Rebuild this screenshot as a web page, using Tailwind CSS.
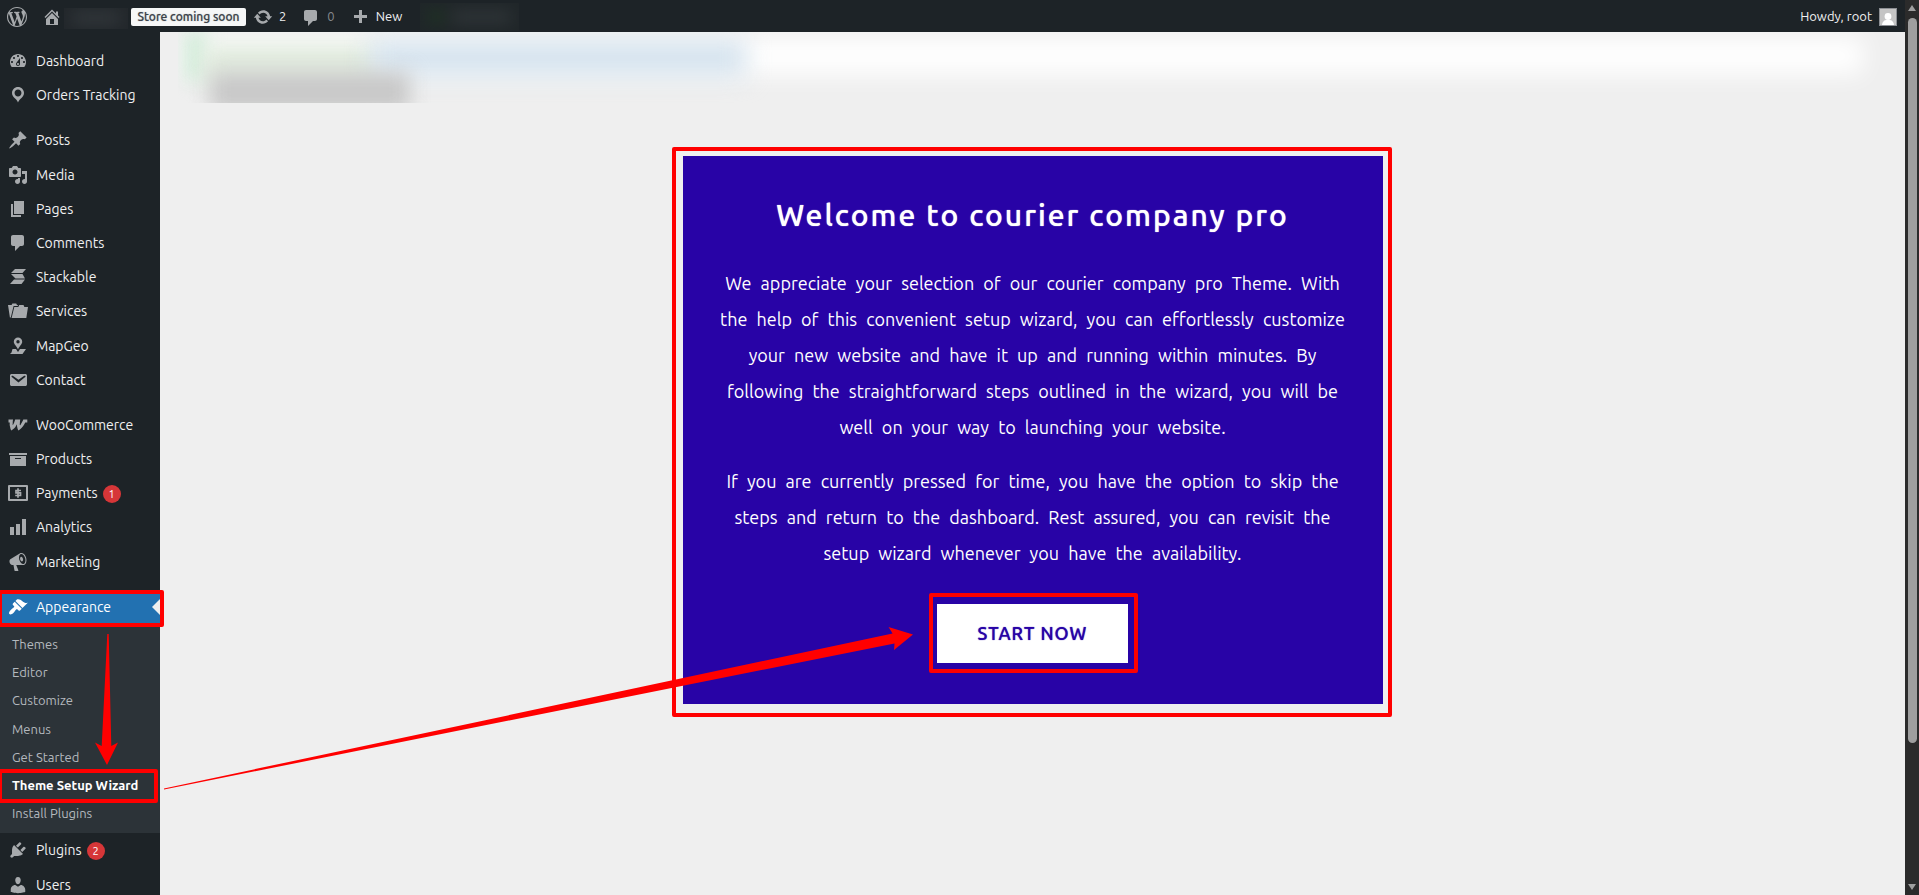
<!DOCTYPE html>
<html lang="en">
<head>
<meta charset="utf-8">
<meta name="viewport" content="width=device-width, initial-scale=1">
<title>Theme Setup Wizard</title>
<script src="https://cdn.jsdelivr.net/npm/@tailwindcss/browser@4"></script>
</head>
<body class="relative flex h-screen overflow-hidden bg-[#efefef] font-['Ubuntu','Open_Sans',sans-serif] text-[#f0f0f1]">

<div class="flex min-w-0 flex-1 flex-col">
  <!-- Admin bar -->
  <header class="flex h-8 shrink-0 items-center bg-[#1d2327] pt-px pr-2 text-[13px] text-[#f0f0f1]">
    <a href="#" aria-label="About WordPress" class="ml-[7px]"><svg class="size-5 fill-[#a7aaad]" viewBox="0 0 20 20"><path d="M20 10c0-5.51-4.49-10-10-10C4.48 0 0 4.49 0 10c0 5.52 4.48 10 10 10 5.51 0 10-4.48 10-10zM7.78 15.37L4.37 6.22c.55-.02 1.17-.08 1.17-.08.5-.06.44-1.13-.06-1.11 0 0-1.45.11-2.37.11-.18 0-.37 0-.58-.01C4.12 2.69 6.87 1.11 10 1.11c2.33 0 4.45.87 6.05 2.34-.68-.11-1.65.39-1.65 1.58 0 .74.45 1.36.9 2.1.35.61.55 1.36.55 2.46 0 1.49-1.4 5-1.4 5l-3.03-8.37c.54-.02.82-.17.82-.17.5-.05.44-1.25-.06-1.22 0 0-1.44.12-2.38.12-.87 0-2.33-.12-2.33-.12-.5-.03-.56 1.2-.06 1.22l.92.08 1.26 3.41zM17.41 10c.24-.64.74-1.87.43-4.25.7 1.29 1.05 2.71 1.05 4.25 0 3.29-1.73 6.24-4.4 7.78.97-2.59 1.94-5.2 2.92-7.78zM6.1 18.09C3.12 16.65 1.11 13.53 1.11 10c0-1.3.23-2.48.72-3.59C3.25 10.3 4.67 14.2 6.1 18.09zm4.03-6.63l2.58 6.98c-.86.29-1.76.45-2.71.45-.79 0-1.57-.11-2.29-.33.81-2.38 1.62-4.74 2.42-7.1z"/></svg></a>
    <a href="#" aria-label="Visit site" class="ml-[15px] flex items-center"><svg class="size-5 fill-[#a7aaad]" viewBox="0 0 20 20"><path d="M16 8.5l1.53 1.53-1.06 1.06L10 4.6l-6.47 6.49-1.06-1.06L10 2.5l4 4v-2h2v4zm-6-2.46l6 5.99V18H4v-5.97zM12 17v-5H8v5h4z"/></svg>
      <span class="ml-0.5 mt-1 h-[21px] w-16 overflow-hidden bg-[#22272b]"><span class="mx-2 my-1 block h-3 bg-[#34393d] blur-sm"></span></span></a>
    <a href="#" class="ml-[3px] h-[18px] w-[115px] rounded-xs bg-[#f6f7f7] text-center text-xs leading-[18px] font-medium text-[#3c434a] [text-shadow:0_0_1px_#3c434a80]">Store coming soon</a>
    <a href="#" class="ml-[7px] flex items-center gap-1.5"><svg class="size-5 fill-[#a7aaad]" viewBox="0 0 20 20"><path d="M10.2 3.28c3.53 0 6.43 2.61 6.92 6h2.08l-3.5 4-3.5-4h2.32c-.45-1.97-2.21-3.45-4.32-3.45-1.45 0-2.73.71-3.54 1.78L4.95 5.66C6.23 4.2 8.11 3.28 10.2 3.28zm-.4 13.44c-3.52 0-6.43-2.61-6.92-6H.8l3.5-4c1.17 1.33 2.33 2.67 3.5 4H5.48c.45 1.97 2.21 3.45 4.32 3.45 1.45 0 2.73-.71 3.54-1.78l1.71 1.95c-1.28 1.46-3.15 2.38-5.25 2.38z"/></svg>2</a>
    <a href="#" class="ml-[15px] flex items-center gap-1.5 text-[#84888b]"><svg class="mt-0.5 size-5 fill-[#a7aaad]" viewBox="0 0 20 20"><path d="M5 2h9c1.1 0 2 .9 2 2v7c0 1.1-.9 2-2 2h-2l-5 5v-5H5c-1.1 0-2-.9-2-2V4c0-1.1.9-2 2-2z"/></svg>0</a>
    <a href="#" class="ml-[15px] flex items-center gap-1.5"><svg class="mt-0.5 size-5 fill-[#a7aaad]" viewBox="0 0 20 20"><path d="M17 7v3h-5v5H9v-5H4V7h5V2h3v5h5z"/></svg>New</a>
    <span class="ml-[18px] h-7 w-[99px] overflow-hidden bg-[#202629]"><span class="flex h-full gap-2 px-2 py-2 blur-sm"><span class="w-4 bg-[#1f3524]"></span><span class="flex-1 bg-[#31373a]"></span></span></span>
    <a href="#" class="ml-auto flex items-center gap-[7px]">Howdy, root
      <svg class="size-[18px]" viewBox="0 0 18 18"><rect width="18" height="18" fill="#8c8f94"/><rect x="1" y="1" width="16" height="16" fill="#c5c5c5"/><circle cx="9" cy="8.500" r="3.400" fill="#fff"/><path d="M3 17c.3-2.800 1.600-4.500 4-5h4c2.400.5 3.700 2.200 4 5z" fill="#fff"/></svg></a>
  </header>

  <div class="flex min-h-0 flex-1">
    <!-- Admin menu -->
    <nav class="w-40 shrink-0 bg-[#1d2327] pt-3 text-sm leading-[18px]">
      <ul class="[&_svg]:mx-2 [&_svg]:size-5 [&_svg]:shrink-0 [&_svg]:fill-[#a7aaad]">
        <li><a href="#" class="flex h-[34px] items-center"><svg viewBox="0 0 20 20"><path d="M3.76 16h12.48c1.1-1.37 1.76-3.11 1.76-5 0-4.42-3.58-8-8-8s-8 3.58-8 8c0 1.89.66 3.63 1.76 5zM10 4c.55 0 1 .45 1 1s-.45 1-1 1-1-.45-1-1 .45-1 1-1zM6 6c.55 0 1 .45 1 1s-.45 1-1 1-1-.45-1-1 .45-1 1-1zm8 0c.55 0 1 .45 1 1s-.45 1-1 1-1-.45-1-1 .45-1 1-1zm-5.37 5.55L12 7v6c0 1.1-.9 2-2 2s-2-.9-2-2c0-.57.24-1.08.63-1.45zM4 10c.55 0 1 .45 1 1s-.45 1-1 1-1-.45-1-1 .45-1 1-1zm12 0c.55 0 1 .45 1 1s-.45 1-1 1-1-.45-1-1 .45-1 1-1zm-5 3c0-.55-.45-1-1-1s-1 .45-1 1 .45 1 1 1 1-.45 1-1z"/></svg>Dashboard</a></li>
        <li class="mb-[11px]"><a href="#" class="flex h-[34px] items-center"><svg viewBox="0 0 20 20"><path d="M10 2C6.69 2 4 4.69 4 8c0 2.02 1.17 3.71 2.53 4.89.43.37 1.18.96 1.85 1.83.74.97 1.41 2.01 1.62 2.71.21-.7.88-1.74 1.62-2.71.67-.87 1.42-1.46 1.85-1.83C14.83 11.71 16 10.02 16 8c0-3.31-2.69-6-6-6zm0 2.56c1.9 0 3.44 1.54 3.44 3.44S11.9 11.44 10 11.44 6.56 9.9 6.56 8 8.1 4.56 10 4.56z"/></svg>Orders Tracking</a></li>
        <li class="mb-px"><a href="#" class="flex h-[34px] items-center"><svg viewBox="0 0 20 20"><path d="M10.44 3.02l1.82-1.82 6.36 6.35-1.83 1.82c-1.05-.68-2.48-.57-3.41.36l-.75.75c-.92.93-1.04 2.35-.35 3.41l-1.83 1.82-2.41-2.41-2.8 2.79c-.42.42-3.38 2.71-3.8 2.29s1.86-3.39 2.28-3.81l2.79-2.79L4.1 9.36l1.83-1.82c1.05.69 2.48.57 3.4-.36l.75-.75c.93-.92 1.05-2.35.36-3.41z"/></svg>Posts</a></li>
        <li><a href="#" class="flex h-[34px] items-center"><svg viewBox="0 0 20 20"><path d="M13 11V4c0-.55-.45-1-1-1h-1.67L9 1H5L3.67 3H2c-.55 0-1 .45-1 1v7c0 .55.45 1 1 1h10c.55 0 1-.45 1-1zM7 4.5c1.38 0 2.5 1.12 2.5 2.5S8.38 9.5 7 9.5 4.5 8.38 4.5 7 5.62 4.5 7 4.5zM14 6h5v10.5c0 1.38-1.12 2.5-2.5 2.5S14 17.88 14 16.5s1.12-2.5 2.5-2.5c.17 0 .34.02.5.05V9h-3V6zm-4 8.05V13h2v3.5c0 1.38-1.12 2.5-2.5 2.5S7 17.88 7 16.5 8.12 14 9.5 14c.17 0 .34.02.5.05z"/></svg>Media</a></li>
        <li><a href="#" class="flex h-[34px] items-center"><svg viewBox="0 0 20 20"><path d="M6 15V2h10v13H6zm-1 1h8v2H3V5h2v11z"/></svg>Pages</a></li>
        <li><a href="#" class="flex h-[34px] items-center"><svg viewBox="0 0 20 20"><path d="M5 2h9c1.1 0 2 .9 2 2v7c0 1.1-.9 2-2 2h-2l-5 5v-5H5c-1.1 0-2-.9-2-2V4c0-1.1.9-2 2-2z"/></svg>Comments</a></li>
        <li><a href="#" class="flex h-[34px] items-center"><svg viewBox="0 0 20 20"><path d="M7 2h11l-3.500 4H3zM3 7h11.500L17 11.500H7.500zM6 12.500h11L13.500 17H2z"/></svg>Stackable</a></li>
        <li class="mb-px"><a href="#" class="flex h-[34px] items-center"><svg viewBox="0 0 20 20"><path d="M0 4h3.600l.8-1.500h3.800L9 4h1l-.3 1H5.600L2.800 16.500h-.9zM6.300 6h4l.9-2h4.300l.9 2H20l-1.700 11H3.600z"/></svg>Services</a></li>
        <li><a href="#" class="flex h-[34px] items-center"><svg viewBox="0 0 20 20"><path fill-rule="evenodd" d="M10 1.500a4.200 4.200 0 0 1 4.200 4.200c0 2.600-2.900 4.300-4.200 7.800-1.300-3.500-4.200-5.200-4.200-7.800A4.200 4.200 0 0 1 10 1.500zm0 2.600a1.700 1.700 0 1 0 0 3.400 1.700 1.700 0 0 0 0-3.400z"/><path d="M4.500 13H8l2 3 2-3h6l-3.500 5H2l1.500-1.500z"/></svg>MapGeo</a></li>
        <li class="mb-[11px]"><a href="#" class="flex h-[34px] items-center"><svg viewBox="0 0 20 20"><path d="M3.870 4h13.250C18.370 4 19 4.590 19 5.790v8.420c0 1.190-.63 1.790-1.880 1.790H3.870c-1.250 0-1.880-.6-1.880-1.790V5.790c0-1.200.63-1.790 1.880-1.790zm6.620 8.600l6.740-5.530c.24-.2.43-.66.13-1.070-.29-.41-.82-.42-1.170-.17l-5.700 3.860L4.800 5.830c-.35-.25-.88-.24-1.170.17-.3.41-.11.87.13 1.070z"/></svg>Contact</a></li>
        <li><a href="#" class="flex h-[34px] items-center"><svg viewBox="0 0 20 20"><path d="M.5 6h2.800c-.4 3-.3 5.200.6 7.300C5.900 12 7.300 9.500 8.300 6h2.200c-.5 3-.3 5.200.5 7.300 2.200-1.500 3.900-4 5.300-7.300h3" fill="none" stroke="#a7aaad" stroke-width="3"/></svg>WooCommerce</a></li>
        <li><a href="#" class="flex h-[34px] items-center"><svg viewBox="0 0 20 20"><path d="M19 4v2H1V4h18zM2 7h16v10H2V7zm11 3V9H7v1h6z"/></svg>Products</a></li>
        <li><a href="#" class="flex h-[34px] items-center"><svg viewBox="0 0 20 20"><path fill-rule="evenodd" d="M1 2h18a1 1 0 0 1 1 1v14a1 1 0 0 1-1 1H1a1 1 0 0 1-1-1V3a1 1 0 0 1 1-1zm1 2v12h16V4z"/><path d="M13 7.500H8v2.400h4.500v2.600H7.200M10 5.200v9.600" fill="none" stroke="#a7aaad" stroke-width="1.700"/></svg>Payments<span class="ml-[5px] mt-px size-[18px] rounded-full bg-[#d63638] text-center text-[11px] text-white">1</span></a></li>
        <li class="mb-px"><a href="#" class="flex h-[34px] items-center"><svg viewBox="0 0 20 20"><path d="M18 18V2h-4v16h4zm-6 0V7H8v11h4zm-6 0v-8H2v8h4z"/></svg>Analytics</a></li>
        <li class="mb-[11px]"><a href="#" class="flex h-[34px] items-center"><svg viewBox="0 0 20 20"><path d="M18.150 5.940c.46 1.620.38 3.220-.02 4.480-.42 1.280-1.260 2.180-2.300 2.480-.16.06-.26.06-.4.06-.06.02-.12.02-.18.02-.06.02-.14.02-.22.02h-6.800l2.220 5.500c.02.14-.06.26-.14.34-.08.1-.24.16-.34.16H6.950c-.1 0-.26-.06-.34-.16-.08-.08-.16-.2-.14-.34l-1-5.500H4.250l-.02-.02c-.5.06-1.080-.18-1.540-.62s-.88-1.080-1.060-1.880c-.24-.8-.2-1.560-.02-2.200.18-.62.58-1.080 1.060-1.300l.02-.02 9-5.400c.1-.06.18-.1.24-.16.06-.04.14-.08.24-.12.16-.08.28-.12.5-.18 1.040-.3 2.240.1 3.220.98s1.840 2.240 2.260 3.860zm-2.580 5.980h-.02c.4-.1.74-.34 1.040-.7.58-.7.86-1.760.86-3.040 0-.64-.1-1.300-.28-1.980-.34-1.360-1.020-2.500-1.780-3.240s-1.680-1.100-2.460-.88c-.82.22-1.400.96-1.700 2-.32 1.040-.28 2.360.06 3.720.38 1.360 1 2.500 1.800 3.240.78.74 1.620 1.100 2.480.88zm-2.540-7.080c.22-.04.42-.02.62.04.38.16.76.48 1.020 1s.42 1.200.42 1.780c0 .3-.04.56-.12.8-.18.48-.44.84-.86.94-.34.1-.8-.06-1.140-.4s-.64-.86-.78-1.500c-.18-.62-.12-1.240.02-1.720s.48-.84.82-.94z"/></svg>Marketing</a></li>
        <li class="relative">
          <a href="#" class="flex h-[34px] items-center bg-[#2271b1] text-white"><svg viewBox="0 0 20 20"><path fill="#fff" d="M14.480 11.060L7.410 3.990l1.500-1.500c.5-.56 2.300-.47 3.510.32 1.210.8 1.430 1.280 2.910 2.100 1.180.64 2.450 1.260 4.450.85zm-.71.71L6.700 4.700 4.930 6.470c-.39.39-.39 1.020 0 1.410l1.060 1.060c.39.39.39 1.030 0 1.420-.6.6-1.430 1.110-2.210 1.690-.35.26-.7.53-1.010.84C1.430 14.230.4 16.080 1.400 17.070c.99 1 2.840-.03 4.180-1.360.31-.31.58-.66.85-1.020.57-.78 1.080-1.610 1.690-2.210.39-.39 1.020-.39 1.410 0l1.060 1.060c.39.39 1.020.39 1.410 0z"/></svg>Appearance
            <span class="ml-auto border-y-8 border-r-8 border-y-transparent border-r-[#efefef]"></span></a>
          <span class="absolute top-0 -right-1 -left-0.5 h-[37px] rounded-xs border-4 border-[#ff0000]"></span>
          <ul class="bg-[#2c3338] py-1.5 text-[13px] leading-7 text-[#b4b9be] [&_a]:block [&_a]:pl-3">
            <li><a href="#">Themes</a></li>
            <li><a href="#">Editor</a></li>
            <li><a href="#">Customize</a></li>
            <li class="mt-px"><a href="#">Menus</a></li>
            <li><a href="#">Get Started</a></li>
            <li class="relative"><a href="#" aria-current="page" class="font-bold text-white">Theme Setup Wizard</a>
              <span class="absolute -top-0.5 right-0.5 -left-0.5 h-[34px] rounded-xs border-4 border-[#ff0000]"></span></li>
            <li><a href="#">Install Plugins</a></li>
          </ul>
        </li>
        <li class="mb-px"><a href="#" class="flex h-[34px] items-center"><svg viewBox="0 0 20 20"><path d="M13.110 4.360L9.870 7.600 8 5.730l3.240-3.240c.35-.34 1.050-.2 1.560.32.52.51.66 1.210.31 1.550zm-8 1.770l.91-1.120 9.010 9.010-1.190.84c-.71.71-2.630 1.160-3.820 1.160H6.140L4.900 17.260c-.59.59-1.540.59-2.120 0-.59-.58-.59-1.530 0-2.120l1.240-1.240v-3.880c0-1.130.4-3.190 1.090-3.890zm7.260 3.970l3.240-3.240c.34-.35 1.040-.21 1.550.31.52.51.66 1.210.31 1.550l-3.240 3.250z"/></svg>Plugins<span class="ml-[5px] mt-px size-[18px] rounded-full bg-[#d63638] text-center text-[11px] text-white">2</span></a></li>
        <li><a href="#" class="flex h-[34px] items-center"><svg viewBox="0 0 20 20"><path d="M10 9.250c-2.270 0-2.730-3.440-2.730-3.440C7 4.020 7.820 2 9.970 2c2.160 0 2.980 2.020 2.710 3.810 0 0-.41 3.440-2.680 3.440zm0 2.570L12.720 10c2.390 0 4.520 2.330 4.520 4.530v2.490s-3.650 1.130-7.240 1.130c-3.650 0-7.240-1.130-7.240-1.130v-2.490c0-2.250 1.940-4.480 4.470-4.480z"/></svg>Users</a></li>
      </ul>
    </nav>

    <main class="min-w-0 flex-1">
      <!-- Obscured notice -->
      <div class="relative mx-[18px] h-[71px] overflow-hidden" aria-hidden="true">
        <div class="absolute top-1.5 right-6 left-2 h-9 bg-white blur-[12px]"></div>
        <div class="absolute top-0 left-2 h-12 w-5 bg-[#cdebd6] blur-[9px]"></div>
        <div class="absolute top-3 left-6 h-10 w-44 bg-[#e2ecdf] blur-[10px]"></div>
        <div class="absolute top-2 left-48 h-9 w-[376px] bg-[#d5e3ee] blur-[12px]"></div>
        <div class="absolute top-10 left-8 h-10 w-[200px] bg-[#c8c8c8] blur-[10px]"></div>
      </div>

      <section class="relative mx-auto mt-[53px] flex w-[700px] max-w-full flex-col items-center bg-[#2803a6] px-[30px] pt-[38px] pb-[41px] text-center text-white">
        <h1 class="text-[30px] leading-[42px] font-medium tracking-[2px] [text-shadow:0_0_1px_#fff]">Welcome to courier company pro</h1>
        <p class="mt-[29px] text-lg leading-9 whitespace-nowrap [word-spacing:5px]">We appreciate your selection of our courier company pro Theme. With<br>the help of this convenient setup wizard, you can effortlessly customize<br>your new website and have it up and running within minutes. By<br>following the straightforward steps outlined in the wizard, you will be<br>well on your way to launching your website.</p>
        <p class="mt-[18px] text-lg leading-9 whitespace-nowrap [word-spacing:5px]">If you are currently pressed for time, you have the option to skip the<br>steps and return to the dashboard. Rest assured, you can revisit the<br>setup wizard whenever you have the availability.</p>
        <div class="relative mt-[33px]">
          <button type="button" class="block h-[59px] w-[191px] bg-white pb-0.5 text-lg font-medium tracking-[1px] text-[#2803a6] [text-shadow:0_0_1px_#2803a6]">START NOW</button>
          <span class="pointer-events-none absolute -top-[11px] -right-2.5 -bottom-2.5 -left-2 rounded-xs border-4 border-[#ff0000]"></span>
        </div>
        <span class="pointer-events-none absolute -top-[9px] -right-[9px] -bottom-[13px] -left-[11px] rounded-xs border-4 border-[#ff0000]"></span>
      </section>
    </main>
  </div>
</div>

<!-- Scrollbar -->
<div class="flex w-3.5 shrink-0 flex-col items-center bg-[#2b2b2b] py-[5px]" aria-hidden="true">
  <span class="border-x-4 border-b-[6px] border-x-transparent border-b-[#9f9f9f]"></span>
  <span class="mt-[7px] h-[725px] w-[9px] rounded-full bg-[#9f9f9f]"></span>
  <span class="mt-auto border-x-4 border-t-[6px] border-x-transparent border-t-[#9f9f9f]"></span>
</div>

<!-- Annotation arrows -->
<svg class="pointer-events-none absolute top-0 left-0" width="1919" height="895" viewBox="0 0 1919 895" fill="#ff0000" aria-hidden="true">
  <path d="M107.300 634h1.400L111.300 746l6.700-3.500L107 765 95 742.500l6.700 3.500z"/>
  <path d="M164 788.500L892.600 633.500 888.500 627 913 634.500 894 650 894.500 643.500 164 789.500z"/>
</svg>
</body>
</html>
